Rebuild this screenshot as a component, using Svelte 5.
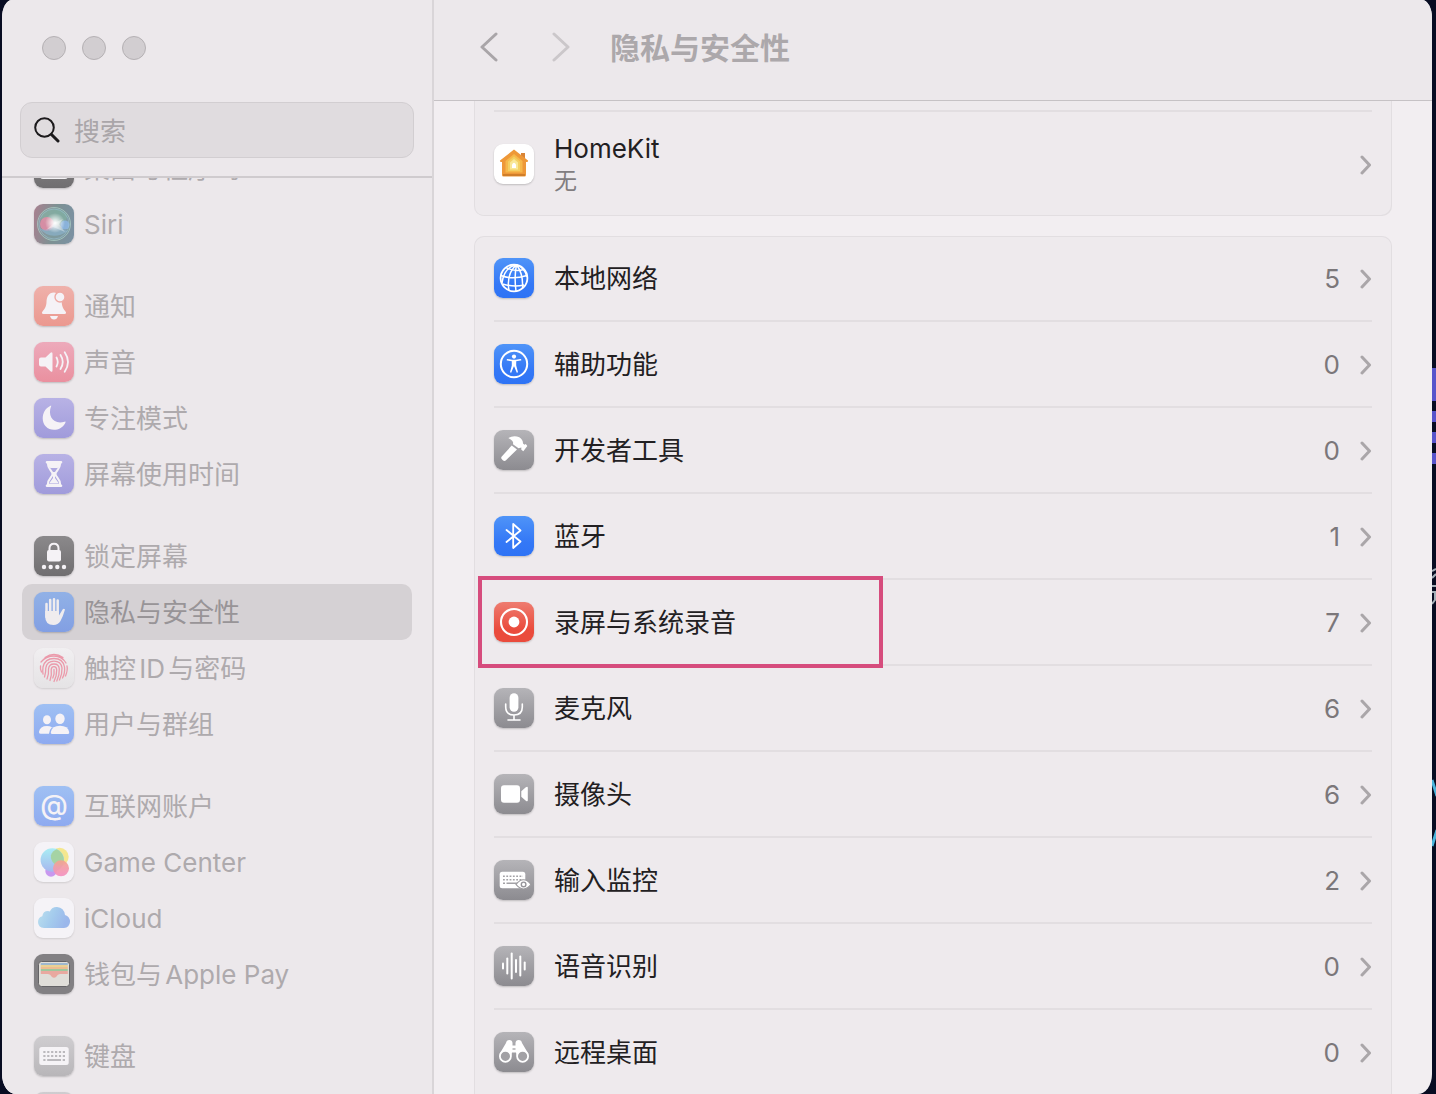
<script lang="ts">
	type SidebarItem = { icon: string; label: string; tone: string; selected?: boolean };
	type SettingRow = { icon: string; label: string; tone: string; count: number; marked?: boolean };

	const title = '隐私与安全性';

	const groups: SidebarItem[][] = [
		[
			{ icon: 'dock', label: '桌面与程序坞', tone: 'dim-black' },
			{ icon: 'siri', label: 'Siri', tone: 'siri' }
		],
		[
			{ icon: 'bell', label: '通知', tone: 'dim-red' },
			{ icon: 'speaker', label: '声音', tone: 'dim-pink' },
			{ icon: 'moon', label: '专注模式', tone: 'dim-purple' },
			{ icon: 'hourglass', label: '屏幕使用时间', tone: 'dim-purple' }
		],
		[
			{ icon: 'lock', label: '锁定屏幕', tone: 'dim-black' },
			{ icon: 'hand', label: '隐私与安全性', tone: 'dim-hand', selected: true },
			{ icon: 'finger', label: '触控ID与密码', tone: 'dim-light' },
			{ icon: 'users', label: '用户与群组', tone: 'dim-blue' }
		],
		[
			{ icon: 'at', label: '互联网账户', tone: 'dim-blue' },
			{ icon: 'game', label: 'Game Center', tone: 'dim-white' },
			{ icon: 'cloud', label: 'iCloud', tone: 'dim-white' },
			{ icon: 'wallet', label: '钱包与Apple Pay', tone: 'dim-wallet' }
		],
		[
			{ icon: 'keyboard', label: '键盘', tone: 'dim-gray' },
			{ icon: '', label: '', tone: 'dim-gray' }
		]
	];

	const rows: SettingRow[] = [
		{ icon: 'globe', label: '本地网络', tone: 'blue', count: 5 },
		{ icon: 'access', label: '辅助功能', tone: 'blue', count: 0 },
		{ icon: 'hammer', label: '开发者工具', tone: 'gray', count: 0 },
		{ icon: 'bluetooth', label: '蓝牙', tone: 'blue', count: 1 },
		{ icon: 'record', label: '录屏与系统录音', tone: 'red', count: 7, marked: true },
		{ icon: 'mic', label: '麦克风', tone: 'gray', count: 6 },
		{ icon: 'camera', label: '摄像头', tone: 'gray', count: 6 },
		{ icon: 'keyeye', label: '输入监控', tone: 'gray', count: 2 },
		{ icon: 'wave', label: '语音识别', tone: 'gray', count: 0 },
		{ icon: 'binoculars', label: '远程桌面', tone: 'gray', count: 0 }
	];

	const bars = [[9, 2.5], [13.3, 7.5], [17.7, 12.5], [22, 6], [26.3, 9.5], [30.7, 3.5]];
</script>

{#snippet chevron()}
	<svg class="chevron" viewBox="0 0 12 20" aria-hidden="true">
		<path d="M2 2 L9.5 10 L2 18" />
	</svg>
{/snippet}

{#snippet glyph(name: string, tone: string)}
	<span class="icon {tone}">
		<svg viewBox="0 0 40 40" aria-hidden="true">
			{#if name === 'dock'}
				<rect x="6" y="9" width="28" height="22" rx="3" fill="#f4f2f5" />
				<rect x="7.5" y="26" width="25" height="3" rx="1" fill="#767475" />
			{:else if name === 'siri'}
				<defs>
					<radialGradient id="siriGlow"><stop offset="0" stop-color="#fff" /><stop offset=".35" stop-color="#fff" stop-opacity=".7" /><stop offset="1" stop-color="#fff" stop-opacity="0" /></radialGradient>
				</defs>
				<circle cx="20" cy="20" r="16.5" fill="#82a3a5" fill-opacity=".5" stroke="#aed0c8" stroke-opacity=".7" stroke-width="1" />
				<ellipse cx="20" cy="13" rx="13" ry="8" fill="#83b9a4" fill-opacity=".5" />
				<circle cx="13" cy="20" r="7" fill="#e98ba6" fill-opacity=".8" />
				<circle cx="31" cy="21" r="4.5" fill="#8db8e9" fill-opacity=".8" />
				<path d="M5 24 Q17 38 34 27 Q24 24 20 20 Q14 29 5 24" fill="#8cb6d2" fill-opacity=".6" />
				<path d="M20 19 L29 15 L25 20 L31 28 L19 23 L12 26 Z" fill="#fff" fill-opacity=".35" />
				<circle cx="21" cy="19" r="10" fill="url(#siriGlow)" />
				<circle cx="20" cy="20" r="15" fill="none" stroke="#9fc8dd" stroke-opacity=".7" stroke-width=".7" />
			{:else if name === 'bell'}
				<path d="M20 6.5 C14.5 6.5 12.7 11 12.5 16 C12.3 21 10.5 23 8.5 25.5 C7.4 27 8 28 9.5 28 H30.5 C32 28 32.6 27 31.5 25.5 C29.5 23 28 21 27.7 16 L24 8 Q22.5 6.5 20 6.5 Z" fill="#f5f2f6" />
				<path d="M16 30 H24 Q23 33.5 20 33.5 Q17 33.5 16 30 Z" fill="#f5f2f6" />
				<circle cx="26" cy="11" r="5" fill="#f5f2f6" stroke="#eeaaa4" stroke-width="1.4" />
			{:else if name === 'speaker'}
				<path d="M7 15.5 H11.5 L16.5 10.7 Q18.5 9.2 18.5 11.7 V28.3 Q18.5 30.8 16.5 29.3 L11.5 24.5 H7 Q5 24.5 5 22.5 V17.5 Q5 15.5 7 15.5 Z" fill="#f5f2f6" />
				<path d="M22.5 15.5 Q25 20 22.5 24.5 M26.5 13 Q31 20 26.5 27 M30.7 10.3 Q37.3 20 30.7 29.7" fill="none" stroke="#f5f2f6" stroke-width="1.8" stroke-linecap="round" />
			{:else if name === 'moon'}
				<path d="M17.2 8 C13 18.5 20 27 30.5 23.7 Q32.2 23.2 31.3 25 C28.5 30 24.5 31.8 20 31.8 C13.5 31.8 8.7 27 8.7 20.5 C8.7 14.8 11.5 10.6 15.7 8.3 Q17.5 7 17.2 8 Z" fill="#f5f2f6" />
			{:else if name === 'hourglass'}
				<path d="M13 8.3 H27 M13 31.7 H27" stroke="#f5f2f6" stroke-width="2.6" stroke-linecap="round" />
				<path d="M13.8 9 C13.8 16 18.5 16.5 18.5 20 C18.5 23.5 13.8 24 13.8 31 H26.2 C26.2 24 21.5 23.5 21.5 20 C21.5 16.5 26.2 16 26.2 9 Z" fill="none" stroke="#f5f2f6" stroke-width="2" />
				<path d="M13.8 8.5 H26.2 V12 L23.5 14 H16.5 L13.8 12 Z M19 18 H21 V24 L25 29.5 H15 L19 24 Z" fill="#f5f2f6" />
			{:else if name === 'lock'}
				<path d="M15.5 15 V12.3 Q15.5 7.7 20 7.7 Q24.5 7.7 24.5 12.3 V15" fill="none" stroke="#f5f2f6" stroke-width="2" />
				<rect x="13" y="14" width="14" height="11.5" rx="2" fill="#f5f2f6" />
				<g fill="#f5f2f6"><circle cx="10" cy="31" r="2.2" /><circle cx="16.7" cy="31" r="2.2" /><circle cx="23.3" cy="31" r="2.2" /><circle cx="30" cy="31" r="2.2" /></g>
			{:else if name === 'hand'}
				<path d="M12.5 12 V25 M16.2 8 V22 M20 7.2 V22 M23.7 8.5 V22" stroke="#efecee" stroke-width="2.5" stroke-linecap="round" />
				<path d="M11.2 19 H25 V23.5 L28.6 17.6 Q29.7 16 31 17.4 Q28.8 25 26.5 29 Q24 33 19.5 33 Q11.2 33 11.2 24.5 Z" fill="#efecee" />
			{:else if name === 'finger'}
				<g fill="none" stroke="#eb99aa" stroke-width="1.3" stroke-linecap="round">
					<path d="M11 9.5 Q20 3.2 29 9.5 M7 14 Q12 8 20 8 Q28 8 32 15 M6.5 18 Q6 21 7.5 24 M33 18 Q34 22 31.5 28" />
					<path d="M9 26 Q8.5 23 9 19 Q11 10.5 20 10.5 Q29 10.5 30.5 19 Q31.2 25 28.5 30" />
					<path d="M10.5 29 Q12 24 11.8 20 Q13 13.2 20 13.2 Q27 13.2 28 20 Q28.3 26 25.5 32" />
					<path d="M13 31 Q15 26 14.5 21 Q15 16 20 16 Q25 16 25.3 21 Q25.6 27 22.8 33" />
					<path d="M16 32.5 Q18 27 17.2 21.5 Q17.5 18.7 20 18.7 Q22.6 18.7 22.7 22 Q22.8 28 20 33.5" />
					<path d="M20 21.5 Q20.7 26 18.8 30" />
				</g>
			{:else if name === 'users'}
				<g fill="#f5f2f6">
					<ellipse cx="13" cy="15.7" rx="4" ry="4.5" />
					<path d="M6.5 29.7 Q4.7 29.7 5 27.7 Q6 22 13 22 Q16 22 18 23.3 Q15.5 25.5 15 29.7 Z" />
					<ellipse cx="26" cy="14.8" rx="4.7" ry="5.2" />
					<path d="M18 30 Q16.5 30 16.8 28 Q18 21.7 26 21.7 Q34 21.7 35.2 28 Q35.5 30 34 30 Z" />
				</g>
			{:else if name === 'at'}
				<text x="20" y="29" text-anchor="middle" font-family="Inter, sans-serif" font-size="28" font-weight="500" fill="#f5f2f6">@</text>
			{:else if name === 'game'}
				<defs>
					<linearGradient id="gcBlue" x2="0" y2="1"><stop stop-color="#a9edf4" /><stop offset="1" stop-color="#a6b7ee" /></linearGradient>
					<linearGradient id="gcPink" x2="0" y2="1"><stop stop-color="#f3a58f" /><stop offset="1" stop-color="#f48fc2" /></linearGradient>
				</defs>
				<circle cx="17" cy="29" r="5.7" fill="#c898ef" />
				<circle cx="25.7" cy="14.8" r="9" fill="#f4e78f" />
				<circle cx="18.3" cy="18" r="11.7" fill="url(#gcBlue)" />
				<path d="M17 13.3 A9 9 0 0 1 22.8 7.2 A11.7 11.7 0 0 1 28.6 23.2 A9 9 0 0 1 17 13.3" fill="#a5d3a4" />
				<circle cx="27" cy="26.3" r="8" fill="url(#gcPink)" fill-opacity=".92" />
			{:else if name === 'cloud'}
				<defs>
					<linearGradient id="cloudFill" y2=".3"><stop stop-color="#bde1ee" /><stop offset=".55" stop-color="#a4cbed" /><stop offset="1" stop-color="#9bb7eb" /></linearGradient>
				</defs>
				<path d="M10 30 Q4 29.5 4 24 Q4 19.5 8.3 18.2 Q9 13 14 13 L15.8 13.4 Q18 8.8 23 9 Q30 9.5 31 17 Q36 18.5 36 24 Q35.5 29.5 30 30 Z" fill="url(#cloudFill)" />
			{:else if name === 'wallet'}
				<rect x="4.5" y="7.5" width="31" height="25" rx="3" fill="#e0ded9" stroke="#656467" stroke-width="1" />
				<path d="M6.8 10 H33.8" stroke="#9eb8cf" stroke-width="2" />
				<path d="M6.8 12 H33.8" stroke="#ead193" stroke-width="2" />
				<path d="M6.8 14 H33.8" stroke="#edbd91" stroke-width="2" />
				<path d="M6.8 16 H33.8" stroke="#9fc79d" stroke-width="2" />
				<path d="M6.8 17 H33.8 V20 H26 Q23.5 20 22.5 22.5 Q20 25 17.5 22.5 Q16.5 20 14 20 H6.8 Z" fill="#e9a9a0" />
			{:else if name === 'keyboard'}
				<rect x="5.3" y="11" width="29.4" height="18" rx="2.5" fill="#f5f3f6" />
				<path d="M9.3 16 H31 M9.3 20 H31" stroke="#bbb9bd" stroke-width="2.2" stroke-dasharray="2.2 1.7" />
				<path d="M9.3 24 H11.5 M13.2 24 H27 M28.7 24 H31" stroke="#bbb9bd" stroke-width="2.2" />
			{:else if name === 'globe'}
				<g fill="none" stroke="#fff" stroke-width="1.5">
					<circle cx="20" cy="20" r="13.4" stroke-width="1.8" />
					<path d="M22.5 6.8 Q12 16 15 32.5 M22.5 6.8 Q20 18 22 33 M22.5 6.8 Q29.5 16 28.5 30.5 M21 7 Q10 10 8 25 M23 7 Q31 10 33 19" />
					<path d="M12 9.5 Q20 14 30 11.5 M6.8 17.5 Q18 22 33 17.5 M8.5 26 Q20 29.5 30 27" />
				</g>
			{:else if name === 'access'}
				<circle cx="20" cy="20" r="13.2" fill="none" stroke="#fff" stroke-width="2" />
				<circle cx="20" cy="12.6" r="2.1" fill="#fff" />
				<path d="M13.5 15.8 L18 16.5 H22 L26.5 15.8" fill="none" stroke="#fff" stroke-width="1.6" stroke-linecap="round" />
				<path d="M17.8 16 H22.2 V21.5 L24 28.2 L22.8 28.7 L20.2 22.5 H19.8 L17.2 28.7 L16 28.2 L17.8 21.5 Z" fill="#fff" />
			{:else if name === 'hammer'}
				<path d="M17.7 15.5 L23 19.5 L12 30.3 Q10.5 31.5 8.8 30.2 L7.5 28.8 Q6.7 27.3 8 26.2 Z" fill="#fff" />
				<path d="M14.2 8 Q20 4.8 25.3 7.3 Q29 9.5 29 13.5 L30.5 14.8 L31.8 14 L33.3 16 L29.3 21.2 L27.2 19.5 L27.4 17.5 L24.5 18.2 L19 14.2 Q20.2 10.7 14.2 8 Z" fill="#fff" />
			{:else if name === 'bluetooth'}
				<path d="M12.5 14 L26.5 25.5 L19.2 32 V8 L26.5 14.5 L12.5 26" fill="none" stroke="#fff" stroke-width="1.8" stroke-linejoin="round" stroke-linecap="round" />
			{:else if name === 'record'}
				<circle cx="20" cy="20" r="13" fill="none" stroke="#fff" stroke-width="2.1" />
				<circle cx="20" cy="20" r="5.4" fill="#fff" />
			{:else if name === 'mic'}
				<rect x="15.6" y="5.3" width="8.8" height="18.4" rx="4.4" fill="#fff" />
				<path d="M11.7 16 V19 Q11.7 27 20 27 Q28.3 27 28.3 19 V16 M20 27 V32 M14 32 H26" fill="none" stroke="#fff" stroke-width="1.6" stroke-linecap="round" />
			{:else if name === 'camera'}
				<rect x="7" y="11.2" width="19" height="17.6" rx="3" fill="#fff" />
				<path d="M27.3 17.3 L31.8 13.3 Q33.8 12 33.8 14 V26 Q33.8 28 31.8 26.7 L27.3 22.7 Z" fill="#fff" />
			{:else if name === 'keyeye'}
				<rect x="5.7" y="11.7" width="25.6" height="16.6" rx="2.5" fill="#fff" />
				<path d="M9 16.3 H29 M9 19.7 H29" stroke="#a3a2a6" stroke-width="1.6" stroke-dasharray="1.8 1.5" />
				<path d="M9 23.2 H11 M12.5 23.2 H24" stroke="#a3a2a6" stroke-width="1.6" />
				<path d="M22 24.4 Q29.5 15 37 24.4 Q29.5 33.5 22 24.4 Z" fill="#fff" stroke="#9b9a9e" stroke-width="1.1" />
				<circle cx="29.6" cy="24.4" r="2.3" fill="none" stroke="#96959a" stroke-width="1.4" />
			{:else if name === 'wave'}
				{#each bars as [x, half]}
					<path d="M{x} {20 - half} V{20 + half}" stroke="#fff" stroke-width="2" stroke-linecap="round" />
				{/each}
			{:else if name === 'binoculars'}
				<path d="M12 11 Q12.5 8 15.3 8 Q18.3 8 18.5 11 V13.5 H21.5 V11 Q21.7 8 24.7 8 Q27.5 8 28 11 L34.5 22 L23 25 L22 20.5 H18 L17 25 L5.5 22 Z" fill="#fff" />
				<path d="M18.5 17 H21.5" stroke="#a2a1a5" stroke-width="1.3" />
				<circle cx="11.4" cy="24.3" r="5.5" fill="#a2a1a5" stroke="#fff" stroke-width="1.8" />
				<circle cx="28.6" cy="24.3" r="5.5" fill="#a2a1a5" stroke="#fff" stroke-width="1.8" />
			{:else if name === 'home'}
				<path d="M27 9 H31 V16 H27 Z" fill="#d98436" />
				<path d="M20 5.5 L34 16.5 Q34.5 18.5 32 18 V31 Q32 32.5 30.5 32.5 H9.5 Q8 32.5 8 31 V18 Q5.5 18.5 6 16.5 Z" fill="#ee9838" />
				<path d="M9 31 H31" stroke="#c87826" stroke-width="1.6" />
				<path d="M20 10 L28.5 17 V28.5 H11.5 V17 Z" fill="#f6b84a" />
				<path d="M20 12.5 L26 17.5 V27 H14 V17.5 Z" fill="#f3cf62" />
				<path d="M20 15 L24 18.5 V25.5 H16 V18.5 Z" fill="#f9e898" />
				<path d="M18 24 V20.5 Q20 17 22 20.5 V24 Z" fill="#fff" />
			{/if}
		</svg>
	</span>
{/snippet}

<div class="desktop">
	<!-- sliver of the desktop that shows past the right edge -->
	<svg class="backdrop" width="4" height="860" viewBox="0 0 4 860" aria-hidden="true">
		<path d="M0 368 H4 V401 H0 Z M0 411 H4 V422 H0 Z M0 432 H4 V443 H0 Z M0 453 H4 V464 H0 Z" fill="#5854cb" />
		<path d="M0 571 L4 569 M0 578 L4 574 M0 586 H4 M0 592 H4 M3 592 V600 L0 604" fill="none" stroke="#a4afb8" stroke-width="2" />
		<path d="M0 780 L5 796 M5 830 L0 846" stroke="#4bb4dc" stroke-width="3" />
	</svg>

	<div class="window">
		<aside class="sidebar">
			<div class="sidebar-top">
				<div class="lights">
					<button aria-label="关闭"></button>
					<button aria-label="最小化"></button>
					<button aria-label="缩放"></button>
				</div>
				<label class="search">
					<svg viewBox="0 0 26 26" aria-hidden="true">
						<circle cx="10.5" cy="10.5" r="9.3" />
						<path d="M17.5 17.5 L24 24" />
					</svg>
					<input type="text" placeholder="搜索" aria-label="搜索" />
				</label>
			</div>
			<nav>
				<div class="groups">
					{#each groups as group}
						<ul>
							{#each group as item}
								<li>
									<a href="#top" class:selected={item.selected}>
										{@render glyph(item.icon, item.tone)}
										<span class="name">{item.label}</span>
									</a>
								</li>
							{/each}
						</ul>
					{/each}
				</div>
			</nav>
		</aside>

		<main>
			<header>
				<button class="nav-button" aria-label="返回">
					<svg viewBox="0 0 18 30"><path d="M16 2 L2 15 L16 28" /></svg>
				</button>
				<button class="nav-button forward" aria-label="前进">
					<svg viewBox="0 0 18 30"><path d="M2 2 L16 15 L2 28" /></svg>
				</button>
				<h1>{title}</h1>
			</header>

			<div class="content">
				<section class="card tail">
					<button class="row tall">
						{@render glyph('home', 'white')}
						<span class="label">HomeKit<small>无</small></span>
						{@render chevron()}
					</button>
				</section>

				<section class="card">
					{#each rows as row}
						<button class="row" class:marked={row.marked}>
							{@render glyph(row.icon, row.tone)}
							<span class="label">{row.label}</span>
							<span class="count">{row.count}</span>
							{@render chevron()}
						</button>
					{/each}
				</section>
			</div>
		</main>
	</div>
</div>

<style>
	:global(body) {
		background: #080c22;
	}

	.desktop {
		position: relative;
		box-sizing: border-box;
		height: 100vh;
		padding: 0 4px 0 2px;
		overflow: hidden;
		font-family: Inter, 'Noto Sans CJK SC', sans-serif;
		font-size: 26px;
		line-height: 32px;
		text-autospace: normal;
	}

	.backdrop {
		position: absolute;
		top: 0;
		right: 0;
	}

	.window {
		display: flex;
		height: 100%;
		border-radius: 10px 10px 14px 14px / 18px 18px 20px 20px;
		overflow: hidden;
		background: #f2eef1;
	}

	button {
		margin: 0;
		padding: 0;
		border: 0;
		background: none;
		font: inherit;
		color: inherit;
		text-align: left;
	}

	.sidebar {
		display: flex;
		flex-direction: column;
		flex: 0 0 430px;
		min-width: 0;
		background: #ece8eb;
		border-right: 2px solid #d9d5d8;
	}

	.sidebar-top {
		padding: 36px 18px 18px;
		border-bottom: 2px solid #cfcbce;
	}

	.lights {
		display: flex;
		gap: 16px;
		padding: 0 22px;
		margin-bottom: 42px;
	}

	.lights button {
		width: 24px;
		height: 24px;
		border: 1px solid #b5b1b4;
		border-radius: 50%;
		background: #d2ced1;
	}

	.search {
		display: flex;
		align-items: center;
		gap: 14px;
		box-sizing: border-box;
		height: 56px;
		padding: 0 13px;
		border: 1px solid #d2ced1;
		border-radius: 12px;
		background: #e0dcdf;
	}

	.search svg {
		flex: none;
		width: 26px;
		height: 26px;
		fill: none;
		stroke: #1c1a1c;
		stroke-width: 2;
		stroke-linecap: round;
	}

	.search path {
		stroke-width: 3;
	}

	.search input {
		flex: 1;
		min-width: 0;
		padding: 4px 0 0;
		border: 0;
		outline: 0;
		background: none;
		font: inherit;
	}

	.search input::placeholder {
		color: #aaa6a9;
		opacity: 1;
	}

	nav {
		flex: 1;
		min-height: 0;
		overflow: hidden;
	}

	/* list scrolled so its first row slips under the search field */
	.groups {
		display: flex;
		flex-direction: column;
		gap: 26px;
		margin-top: -38px;
		padding: 0 20px;
	}

	ul {
		margin: 0;
		padding: 0;
		list-style: none;
	}

	nav a {
		display: flex;
		align-items: center;
		gap: 10px;
		height: 56px;
		padding: 0 12px;
		border-radius: 10px;
		color: #aeaaad;
		text-decoration: none;
		white-space: nowrap;
	}

	nav a.selected {
		background: #d5d1d4;
		color: #989497;
	}

	/* text sits a touch below the icon's centre line */
	.name,
	.label,
	.count {
		padding-top: 2px;
	}

	.icon {
		flex: none;
		width: 40px;
		height: 40px;
		border-radius: 9px;
		box-shadow: 0 1px 2px rgba(0, 0, 0, 0.2);
	}

	.icon svg {
		display: block;
		width: 40px;
		height: 40px;
	}

	.blue { background: linear-gradient(#4f94f8, #3478f6 65%, #2e73f5); }
	.gray { background: linear-gradient(#b5b4b8, #8c8b90); }
	.red { background: linear-gradient(#ee7c70, #ea4b3c 70%); }
	.white { background: #fff; }
	.siri { background: linear-gradient(100deg, #a9808f, #7d9193 50%, #7b91a4); }
	.dim-black { background: linear-gradient(#8b898b, #706e70); }
	.dim-wallet { background: #828083; }
	.dim-red { background: linear-gradient(#efb1ab, #eb988f); }
	.dim-pink { background: linear-gradient(#edaabb, #ea909f); }
	.dim-purple { background: linear-gradient(#b8b2e5, #a09bdb); }
	.dim-hand { background: linear-gradient(#91b1e6, #829fe3); }
	.dim-blue { background: linear-gradient(#9fc0f3, #8eaaf0); }
	.dim-gray { background: linear-gradient(#cfcdd0, #b8b6b9); }
	.dim-light { background: linear-gradient(#f1eff1, #e5e3e5); }
	.dim-white { background: #f5f3f7; }

	.dim-light,
	.dim-white {
		box-shadow: 0 1px 2px rgba(0, 0, 0, 0.12);
	}

	main {
		display: flex;
		flex-direction: column;
		flex: 1;
		min-width: 0;
	}

	header {
		display: flex;
		align-items: center;
		flex: none;
		box-sizing: border-box;
		height: 101px;
		padding: 0 46px 6px;
		background: #ece8eb;
		border-bottom: 1px solid #c6c2c5;
	}

	.nav-button {
		width: 18px;
		height: 30px;
		margin-right: 54px;
		color: #a9a5a8;
	}

	.nav-button.forward {
		margin-right: 40px;
		color: #cbc7ca;
	}

	.nav-button svg {
		display: block;
		fill: none;
		stroke: currentColor;
		stroke-width: 3;
		stroke-linecap: round;
		stroke-linejoin: round;
	}

	h1 {
		margin: 0;
		padding-top: 2px;
		font-size: 30px;
		line-height: 36px;
		font-weight: 700;
		color: #aca8ab;
	}

	.content {
		display: flex;
		flex-direction: column;
		gap: 20px;
		flex: 1;
		min-height: 0;
		padding: 0 40px;
		overflow: hidden;
	}

	.card {
		flex: none;
		padding: 0 20px 20px;
		border-radius: 10px;
		background: #eeeaed;
		box-shadow: inset 0 0 0 1px #e2dee1;
	}

	/* this card continues above the visible area */
	.card.tail {
		padding: 9px 20px 0;
		border-radius: 0 0 10px 10px;
		box-shadow: inset 1px 0 #e2dee1, inset -1px -1px #e2dee1;
	}

	.row {
		position: relative;
		display: flex;
		align-items: center;
		box-sizing: border-box;
		width: 100%;
		height: 86px;
		border-bottom: 2px solid #e2dee1;
		color: #222022;
	}

	.row.tall {
		height: 106px;
		border-top: 2px solid #e2dee1;
		border-bottom: 0;
	}

	.label {
		flex: 1;
		margin-left: 20px;
	}

	.label small {
		display: block;
		font-size: 23px;
		color: #817d80;
	}

	.count {
		margin-right: 20px;
		color: #7b777a;
	}

	.chevron {
		flex: none;
		width: 12px;
		height: 20px;
		padding-top: 2px;
		fill: none;
		stroke: #aaa6a9;
		stroke-width: 3;
		stroke-linecap: round;
		stroke-linejoin: round;
	}

	.marked::after {
		content: '';
		position: absolute;
		top: -4px;
		left: -16px;
		box-sizing: border-box;
		width: 405px;
		height: 92px;
		border: 4px solid #d64c7d;
	}
</style>
